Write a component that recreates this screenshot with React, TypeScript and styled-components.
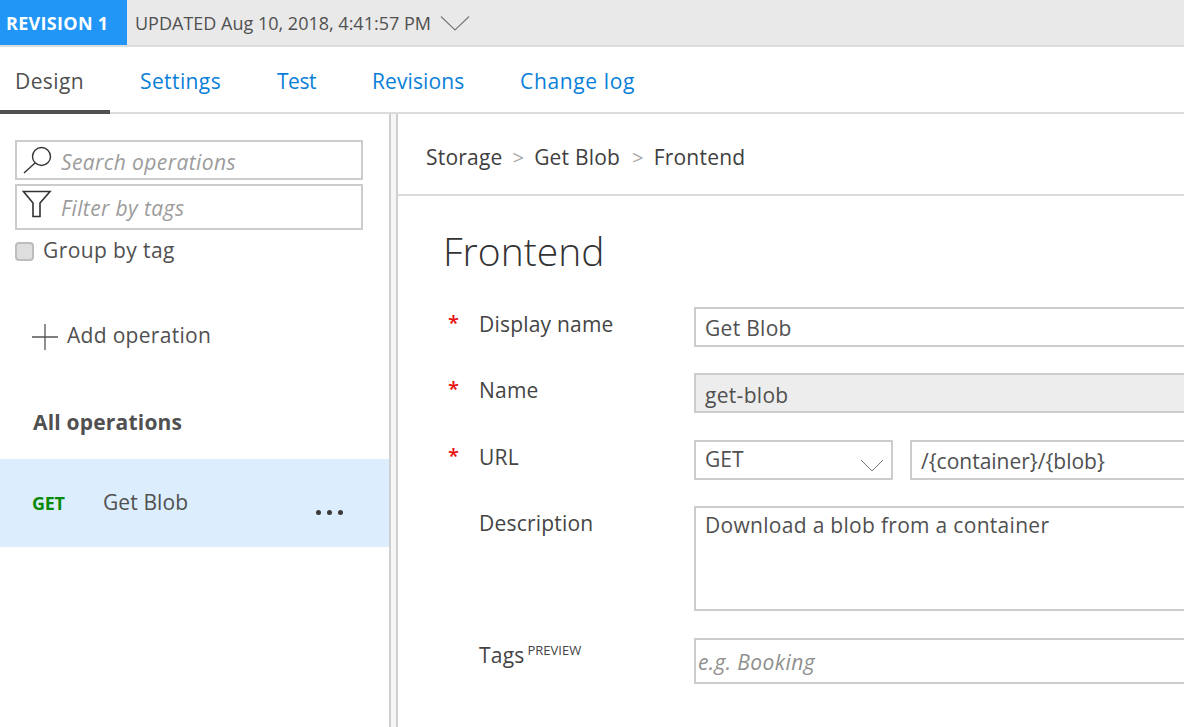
import React from "react";
import styled, { createGlobalStyle } from "styled-components";

const Global = createGlobalStyle`
  html, body { margin: 0; padding: 0; background: #fff; }
  body { font-family: "Open Sans", "Noto Sans", sans-serif; color: #505050; }
  * { box-sizing: border-box; }
`;
const Page = styled.div`
  width: 1184px; height: 727px; overflow: hidden; display: flex; flex-direction: column; background: #fff;
`;
const RevisionBar = styled.div`
  height: 47px; flex: none; display: flex; background: #e9e9e9; border-bottom: 2px solid #dcdcdc;
`;
const RevisionBadge = styled.div`
  width: 127px; background: #2196f7; color: #fff; font-weight: 700; font-size: 18px;
  letter-spacing: 0.3px; display: flex; align-items: center; padding: 1px 0 0 6px;
`;
const Updated = styled.div`
  display: flex; align-items: center; padding: 1px 0 0 8px; font-size: 18px; color: #505050; gap: 9px;
`;
const Tabs = styled.div`
  height: 67px; flex: none; display: flex; border-bottom: 2px solid #dcdcdc;
`;
const Tab = styled.div<{ $active?: boolean; $w: number; $pad?: number; $ls?: number }>`
  width: ${(p) => p.$w}px; height: 67px; flex: none; display: flex; align-items: center;
  padding: 4px 0 0 ${(p) => p.$pad ?? 30}px;
  font-size: 21px; letter-spacing: ${(p) => p.$ls ?? 0.4}px; color: ${(p) => (p.$active ? "#505050" : "#0a7fd8")};
  border-bottom: 4px solid ${(p) => (p.$active ? "#505050" : "transparent")};
`;
const Body = styled.div`flex: 1; display: flex; min-height: 0;`;
const Side = styled.div`
  width: 389px; flex: none; display: flex; flex-direction: column; padding-top: 26px;
`;
const Splitter = styled.div`
  width: 9px; flex: none; background: #f6f6f6; border-left: 2px solid #cfcfcf; border-right: 2px solid #cfcfcf;
`;
const FilterBox = styled.div<{ $h: number; $top?: number }>`
  width: 348px; margin: ${(p) => p.$top ?? 0}px 0 0 15px; border: 2px solid #cccccc; display: flex; align-items: center;
  height: ${(p) => p.$h}px; position: relative; padding: 0 0 0 44px;
`;
const IconHolder = styled.span`position: absolute; left: 5px; top: 2px; display: block; line-height: 0;`;
const FilterInput = styled.input<{ $top: number }>`
  border: 0; outline: 0; background: transparent; width: 100%; padding: ${(p) => p.$top}px 0 0; font: italic 400 21px "Open Sans", sans-serif;
  letter-spacing: 0.4px;
  &::placeholder { color: #9c9c9c; opacity: 1; }
`;
const CheckRow = styled.label`
  display: flex; align-items: center; margin: 6px 0 0 15px; font-size: 21px; letter-spacing: 0.4px; gap: 9px; height: 28px;
`;
const Check = styled.input`
  appearance: none; width: 19px; height: 19px; margin: 2px 0 0; background: #dedede; border: 2px solid #bdbdbd; border-radius: 4px;
`;
const AddOp = styled.div`
  display: flex; align-items: center; margin: 58px 0 0 32px; font-size: 21px; letter-spacing: 0.3px; gap: 9px; height: 30px;
  span { margin-top: -4px; }
`;
const GroupTitle = styled.div`
  margin: 55px 0 0 33px; font-size: 21px; font-weight: 700; letter-spacing: 0.2px; height: 30px; line-height: 30px;
`;
const OpRow = styled.div`
  margin-top: 22px; height: 88px; background: #dceefd; display: flex; align-items: center; padding-left: 32px; position: relative;
`;
const Verb = styled.span`
  width: 71px; color: #0a8a0a; font-weight: 700; font-size: 18px; letter-spacing: -0.3px;
`;
const OpName = styled.span`font-size: 21px; letter-spacing: 0.1px; margin-top: -2px;`;
const Dots = styled.span`
  position: absolute; left: 316px; top: 51px; display: flex; gap: 6px;
  i { display: block; width: 5px; height: 5px; border-radius: 50%; background: #3a3a3a; }
`;
const Main = styled.div`flex: 1; min-width: 0; display: flex; flex-direction: column; overflow: hidden;`;
const Crumbs = styled.div`
  height: 82px; flex: none; border-bottom: 2px solid #dcdcdc; display: flex; align-items: center; padding: 6px 0 0 28px;
  font-size: 21px; letter-spacing: 0.2px; color: #404040; gap: 10px;
`;
const Sep = styled.span<{ $extra?: number }>`color: #a8a8a8; font-size: 20px; margin-left: ${(p) => p.$extra ?? 0}px;`;
const Form = styled.div`padding: 30px 0 0 47px; margin-right: -20px;`;
const Title = styled.h1`
  margin: 0 0 31px -2px; font-weight: 300; font-size: 39px; line-height: 50px; color: #333;
`;
const Field = styled.div<{ $gap?: number }>`
  display: grid; grid-template-columns: 34px 215px 1fr; margin-bottom: ${(p) => p.$gap ?? 26}px;
`;
const Star = styled.span`color: #e81010; font-size: 20px; font-weight: 600; line-height: 30px; margin-top: 1px; padding-left: 3px;`;
const Label = styled.span`font-size: 21px; letter-spacing: 0.2px; line-height: 30px; color: #444; margin-top: 2px;`;
const Preview = styled.sup`font-size: 13px; letter-spacing: 0px; margin-left: 3px; vertical-align: 8px; line-height: 0;`;
const inputCss = `
  border: 2px solid #cccccc; outline: 0; width: 100%; display: block; border-radius: 0;
  font: 400 21px "Open Sans", sans-serif; letter-spacing: 0.3px; color: #505050; padding: 0 9px;
`;
const TextInput = styled.input<{ $disabled?: boolean; $h?: number; $top?: number }>`
  ${inputCss}
  height: ${(p) => p.$h ?? 40}px;
  padding-top: ${(p) => p.$top ?? 1}px;
  background: ${(p) => (p.$disabled ? "#ededed" : "#fff")};
  &::placeholder { color: #8f8f8f; font-style: italic; opacity: 1; }
`;
const PlainInput = styled(TextInput)`padding-left: 2px; letter-spacing: 0.4px;`;
const UrlInput = styled(TextInput)`letter-spacing: 0;`;
const TextArea = styled.textarea`
  ${inputCss}
  height: 105px; resize: none; padding-top: 3px;
`;
const UrlRow = styled.div`display: flex; gap: 17px;`;
const Select = styled.div`
  ${inputCss}
  letter-spacing: 0;
  width: 199px; flex: none; height: 40px; position: relative; display: flex; align-items: center; padding-bottom: 2px;
`;
const Caret = styled.svg`position: absolute; right: 7px; top: 17px;`;

export default function App() {
  return (
    <Page>
      <Global />
      <RevisionBar>
        <RevisionBadge>REVISION 1</RevisionBadge>
        <Updated>
          UPDATED Aug 10, 2018, 4:41:57 PM
          <svg width="30" height="16" viewBox="0 0 30 16" fill="none" stroke="#777" strokeWidth="1.1">
            <path d="M1 1.5 15 15 29 1.5" />
          </svg>
        </Updated>
      </RevisionBar>
      <Tabs>
        <Tab $active $w={110} $pad={15}>Design</Tab>
        <Tab $w={137}>Settings</Tab>
        <Tab $w={95} $ls={-0.45}>Test</Tab>
        <Tab $w={148} $ls={0.1}>Revisions</Tab>
        <Tab $w={170} $ls={0.65}>Change log</Tab>
      </Tabs>
      <Body>
        <Side>
          <FilterBox $h={40}>
            <IconHolder>
              <svg width="32" height="32" viewBox="0 0 32 32" fill="none" stroke="#333" strokeWidth="1.4">
                <circle cx="19.5" cy="12.5" r="9" />
                <path d="M13 19 2 29" />
              </svg>
            </IconHolder>
            <FilterInput $top={3} placeholder="Search operations" readOnly />
          </FilterBox>
          <FilterBox $h={46} $top={4}>
            <IconHolder>
              <svg width="32" height="32" viewBox="0 0 32 32" fill="none" stroke="#333" strokeWidth="1.6">
                <path d="M1.5 3.5h26.5L18 15v13.5h-7V15z" />
              </svg>
            </IconHolder>
            <FilterInput $top={1} placeholder="Filter by tags" readOnly />
          </FilterBox>
          <CheckRow><Check type="checkbox" readOnly />Group by tag</CheckRow>
          <AddOp>
            <svg width="26" height="26" viewBox="0 0 26 26" stroke="#555" strokeWidth="1.3">
              <path d="M0 13h26M13 0v26" />
            </svg>
            <span>Add operation</span>
          </AddOp>
          <GroupTitle>All operations</GroupTitle>
          <OpRow>
            <Verb>GET</Verb>
            <OpName>Get Blob</OpName>
            <Dots><i /><i /><i /></Dots>
          </OpRow>
        </Side>
        <Splitter />
        <Main>
          <Crumbs>
            <span>Storage</span><Sep>&gt;</Sep><span>Get Blob</span><Sep $extra={2}>&gt;</Sep><span>Frontend</span>
          </Crumbs>
          <Form>
            <Title>Frontend</Title>
            <Field>
              <Star>*</Star><Label>Display name</Label>
              <TextInput defaultValue="Get Blob" readOnly />
            </Field>
            <Field $gap={27}>
              <Star>*</Star><Label>Name</Label>
              <TextInput $disabled $top={3} defaultValue="get-blob" readOnly />
            </Field>
            <Field>
              <Star>*</Star><Label>URL</Label>
              <UrlRow>
                <Select>
                  GET
                  <Caret width="24" height="13" viewBox="0 0 24 13" fill="none" stroke="#777" strokeWidth="1">
                    <path d="M1 1 12 12 23 1" />
                  </Caret>
                </Select>
                <UrlInput defaultValue="/{container}/{blob}" readOnly />
              </UrlRow>
            </Field>
            <Field $gap={27}>
              <span /><Label>Description</Label>
              <TextArea defaultValue="Download a blob from a container" readOnly />
            </Field>
            <Field>
              <span /><Label>Tags<Preview>PREVIEW</Preview></Label>
              <PlainInput $h={46} $top={2} placeholder="e.g. Booking" readOnly />
            </Field>
          </Form>
        </Main>
      </Body>
    </Page>
  );
}
